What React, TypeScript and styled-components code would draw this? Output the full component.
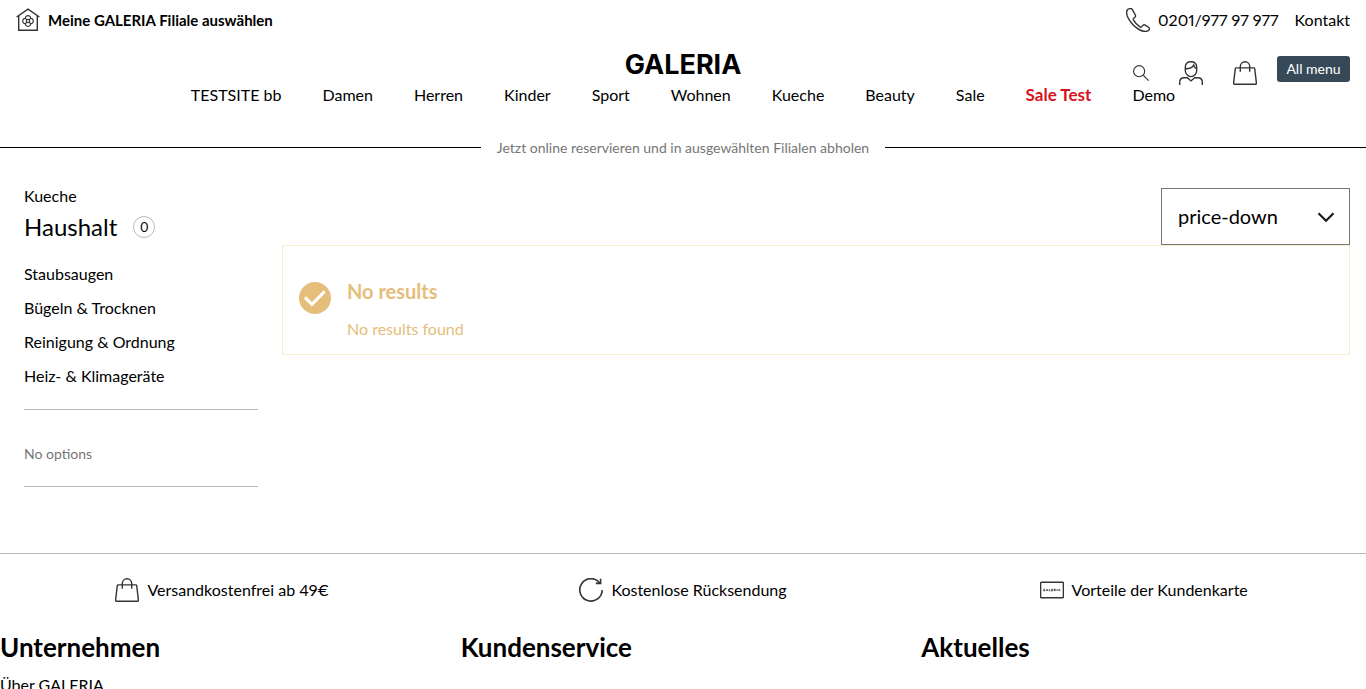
import React from "react";
import styled, { createGlobalStyle, css } from "styled-components";

const GlobalStyle = createGlobalStyle`
  *, *::before, *::after { box-sizing: border-box; }
  html { scrollbar-width: none; }
  body {
    margin: 0;
    background: #fff;
    color: #000;
    font: 400 16px/24px Lato, "Liberation Sans", sans-serif;
    font-variant-numeric: proportional-nums;
  }
  a { color: inherit; text-decoration: none; }
  ul { list-style: none; margin: 0; padding: 0; }
  h1, h2, p { margin: 0; }
  button, select { font: inherit; color: inherit; cursor: pointer; }
`;

const TopBar = styled.div`
  display: flex;
  align-items: center;
  justify-content: space-between;
  height: 40px;
  padding: 0 16px;
`;

const TopLinks = styled.div`
  display: flex;
  gap: 16px;
`;

const TopLink = styled.a<{ $strong?: boolean }>`
  display: inline-flex;
  align-items: center;
  gap: 8px;
  ${p => p.$strong && css`
    font-size: 15px;
    font-weight: 700;
  `}
`;

const Header = styled.header`
  display: grid;
  grid-template-columns: 1fr auto 1fr;
  grid-template-rows: 43px 24px;
  padding: 0 16px;
`;

const Logo = styled.a`
  grid-column: 2;
  align-self: end;
  font: 700 27px/36px Inter, "Liberation Sans", sans-serif;
`;

const HeaderTools = styled.div`
  grid-column: 3;
  display: flex;
  align-items: flex-start;
  justify-content: flex-end;
  padding-top: 16px;
`;

const IconButton = styled.button`
  display: flex;
  align-items: center;
  justify-content: center;
  height: 24px;
  margin: 5px 20px 0 10px;
  padding: 0;
  border: 0;
  background: none;
`;

const MenuButton = styled.button`
  min-width: 73px;
  height: 26px;
  padding: 0 8px;
  border: 0;
  border-radius: 3px;
  background: #374957;
  color: #fff;
  font-size: 14px;
  line-height: 26px;
`;

const MainNav = styled.nav`
  grid-column: 1 / -1;
  grid-row: 2;
  justify-self: center;
`;

const NavList = styled.ul`
  display: flex;
  gap: 41px;
`;

const NavLink = styled.a<{ $sale?: boolean }>`
  ${p => p.$sale && css`
    color: #d7131d;
    font-size: 17px;
    font-weight: 700;
  `}
`;

const Notice = styled.p`
  display: flex;
  align-items: center;
  gap: 16px;
  margin-top: 29px;
  color: #767676;
  font-size: 14px;

  &::before, &::after {
    content: "";
    flex: 1;
    height: 1px;
    margin-bottom: 2px;
    background: #000;
  }
`;

const Main = styled.main`
  display: grid;
  grid-template-columns: 234px minmax(0, 1fr);
  align-items: start;
  gap: 24px;
  padding: 24px 16px 66px 24px;
`;

const CategoryTitle = styled.div`
  display: flex;
  align-items: center;
  gap: 16px;
  margin: 3px 0 14px;
`;

const Title = styled.h1`
  font-size: 24px;
  font-weight: 400;
  line-height: 32px;
`;

const Count = styled.span`
  width: 22px;
  height: 22px;
  border: 1px solid #bababa;
  border-radius: 50%;
  font-size: 13px;
  line-height: 20px;
  text-align: center;
`;

const CategoryList = styled.ul`
  padding-bottom: 16px;
`;

const CategoryItem = styled.li`
  padding: 5px 0;
`;

const Options = styled.p`
  padding: 32px 0 20px;
  border: solid #bababa;
  border-width: 1px 0;
  color: #767676;
  font-size: 14px;
`;

const Results = styled.section`
  display: flex;
  flex-direction: column;
  padding-top: 4px;
`;

const SortField = styled.div`
  display: grid;
  align-items: center;
  align-self: flex-end;
  width: 189px;

  > * { grid-area: 1 / 1; }
  > svg { justify-self: end; margin-right: 14px; pointer-events: none; }
`;

const SortSelect = styled.select`
  appearance: none;
  width: 100%;
  height: 57px;
  padding: 0 48px 2px 16px;
  border: 1px solid #767676;
  border-radius: 0;
  background: #fff;
  font-size: 20px;
`;

const Alert = styled.div`
  display: flex;
  gap: 16px;
  padding: 31px 16px 13px;
  border: 1px solid #f8ebcf;
  color: #e5be7b;

  > svg { margin-top: 5px; }
`;

const AlertTitle = styled.h2`
  margin-bottom: 12px;
  font-size: 20px;
  line-height: 28px;
`;

const Footer = styled.footer`
  border-top: 1px solid #bababa;
`;

const Columns = styled.div`
  display: grid;
  grid-template-columns: repeat(3, minmax(0, 1fr));
  column-gap: 16px;
`;

const Benefit = styled.div`
  display: flex;
  align-items: center;
  justify-content: center;
  gap: 8px;
  padding: 24px 0;
`;

const FooterTitle = styled.h2`
  margin: 5px 0 10px;
  font-size: 26px;
  line-height: 32px;
`;

const Icon = styled.svg.attrs({ viewBox: "0 0 24 24", "aria-hidden": true })<{ $size?: number }>`
  flex: none;
  display: block;
  width: ${p => p.$size ?? 24}px;
  height: ${p => p.$size ?? 24}px;
  fill: none;
  stroke: #333;
  stroke-width: 1.4;
`;

const StoreIcon = () => (
  <Icon>
    <path d="M.6 9 12 1.2 23.400 9M2.700 8v14.300h18.600V8" />
    <circle cx="12" cy="13" r="1.700" strokeWidth="1.200" />
    <path strokeWidth="1.200" d="M9.400 10.400c-.4-3.600 5.600-3.600 5.200 0 3.600-.4 3.600 5.600 0 5.200.4 3.600-5.600 3.600-5.200 0-3.600.4-3.600-5.600 0-5.200zM9.400 10.400l1.300 1.300M14.600 10.400l-1.300 1.300M9.400 15.600l1.300-1.300M14.600 15.600l-1.300-1.300" />
  </Icon>
);

const PhoneIcon = () => (
  <Icon>
    <path d="M1.500 1.700C.2 3.400.3 7 3.100 11.700c2.800 4.700 6.500 8.200 10.900 10.300 4.100 1.900 7.300 1.700 9-.1.700-.8.600-1.800-.2-2.400l-3.600-2.400c-.8-.5-1.700-.4-2.300.3l-1.300 1.400c-.5.500-1.100.5-1.700.100-2.700-1.800-5-4.300-6.500-7.100-.3-.6-.2-1.200.3-1.600l1.200-1c.7-.6.8-1.400.4-2.200L6.400 1.700C5.900.7 4.900.4 3.900.6c-1 .200-1.800.5-2.400 1.100z" />
  </Icon>
);

const SearchIcon = () => (
  <Icon $size={16}>
    <path strokeWidth="1.700" d="M17.500 9.300a8.300 8.300 0 1 1-16.600 0 8.300 8.300 0 0 1 16.600 0zM15.200 15.200l8.300 8.300" />
  </Icon>
);

const UserIcon = () => (
  <Icon>
    <path d="M6.300 5.800C6.600 2.500 8.800.700 12 .700s5.400 1.800 5.700 5.100v3.800c0 3.300-2.700 6-5.700 6s-5.700-2.700-5.700-6zM6.300 7.700c4 .1 7-1.100 8.400-3.600.4 1.700 1.400 2.900 3 3.600" />
    <path d="M.7 24v-2.700c0-2.800 1.800-4.600 4.500-4.600h3.200L12 19.900l3.600-3.200h3.200c2.700 0 4.500 1.800 4.500 4.600V24" />
  </Icon>
);

const BagIcon = () => (
  <Icon>
    <path d="M3.300 6.900h17.400c.6 0 .9.300 1 .8l1.700 14.300c.1.800-.4 1.300-1.100 1.300H1.700c-.7 0-1.200-.5-1.100-1.300L2.300 7.700c.1-.5.4-.8 1-.8zM7.300 10.800V5.500a4.700 4.700 0 0 1 9.400 0v5.300" />
  </Icon>
);

const ReturnIcon = () => (
  <Icon>
    <path strokeWidth="1.600" d="M23.200 12A11.200 11.200 0 1 1 20.800 4.900M21.600.8v4.600h-4.800" />
  </Icon>
);

const CardIcon = () => (
  <Icon>
    <rect x=".6" y="4.200" width="22.800" height="15.600" rx="1" />
    <path strokeWidth=".8" d="M5 11.200H3.700v1.700H5v-.8M6.300 13l.8-1.900.8 1.900M9.300 11v1.900h1.200M13 11.200h-1.400v1.700H13M11.600 12h1.200M14.200 13v-1.800h1.200v.9h-1.200l1.200.9M17 11v2M18.500 13l.8-1.900.8 1.900" />
  </Icon>
);

const CheckIcon = () => (
  <Icon $size={32}>
    <circle cx="12" cy="12" r="12" fill="#e5be7b" stroke="none" />
    <path stroke="#fff" strokeWidth="2.300" d="m4.500 11.500 5.200 5.200L19.300 7" />
  </Icon>
);

const ChevronIcon = () => (
  <Icon $size={20}>
    <path stroke="#191919" strokeWidth="2.600" d="m3 7.500 9 9 9-9" />
  </Icon>
);

const navItems = ["TESTSITE bb", "Damen", "Herren", "Kinder", "Sport", "Wohnen", "Kueche", "Beauty", "Sale", "Sale Test", "Demo"];
const categories = ["Staubsaugen", "Bügeln & Trocknen", "Reinigung & Ordnung", "Heiz- & Klimageräte"];
const benefits = [
  { icon: <BagIcon />, label: "Versandkostenfrei ab 49€" },
  { icon: <ReturnIcon />, label: "Kostenlose Rücksendung" },
  { icon: <CardIcon />, label: "Vorteile der Kundenkarte" },
];
const footerColumns = [
  { title: "Unternehmen", links: ["Über GALERIA"] },
  { title: "Kundenservice", links: [] },
  { title: "Aktuelles", links: [] },
];

export default function App() {
  return (
    <>
      <GlobalStyle />
      <TopBar>
        <TopLink href="#" $strong><StoreIcon />Meine GALERIA Filiale auswählen</TopLink>
        <TopLinks>
          <TopLink href="#"><PhoneIcon />0201/977 97 977</TopLink>
          <TopLink href="#">Kontakt</TopLink>
        </TopLinks>
      </TopBar>
      <Header>
        <Logo href="#">GALERIA</Logo>
        <HeaderTools>
          <IconButton aria-label="Suche"><SearchIcon /></IconButton>
          <IconButton aria-label="Mein Konto"><UserIcon /></IconButton>
          <IconButton aria-label="Warenkorb"><BagIcon /></IconButton>
          <MenuButton>All menu</MenuButton>
        </HeaderTools>
        <MainNav>
          <NavList>
            {navItems.map(item => (
              <li key={item}><NavLink href="#" $sale={item === "Sale Test"}>{item}</NavLink></li>
            ))}
          </NavList>
        </MainNav>
      </Header>
      <Notice>Jetzt online reservieren und in ausgewählten Filialen abholen</Notice>
      <Main>
        <aside>
          <a href="#">Kueche</a>
          <CategoryTitle>
            <Title>Haushalt</Title>
            <Count>0</Count>
          </CategoryTitle>
          <CategoryList>
            {categories.map(name => <CategoryItem key={name}><a href="#">{name}</a></CategoryItem>)}
          </CategoryList>
          <Options>No options</Options>
        </aside>
        <Results>
          <SortField>
            <SortSelect aria-label="Sortierung" defaultValue="price-down">
              <option>price-down</option>
            </SortSelect>
            <ChevronIcon />
          </SortField>
          <Alert role="status">
            <CheckIcon />
            <div>
              <AlertTitle>No results</AlertTitle>
              <p>No results found</p>
            </div>
          </Alert>
        </Results>
      </Main>
      <Footer>
        <Columns>
          {benefits.map(({ icon, label }) => <Benefit key={label}>{icon}{label}</Benefit>)}
        </Columns>
        <Columns>
          {footerColumns.map(({ title, links }) => (
            <section key={title}>
              <FooterTitle>{title}</FooterTitle>
              <ul>{links.map(link => <li key={link}><a href="#">{link}</a></li>)}</ul>
            </section>
          ))}
        </Columns>
      </Footer>
    </>
  );
}
